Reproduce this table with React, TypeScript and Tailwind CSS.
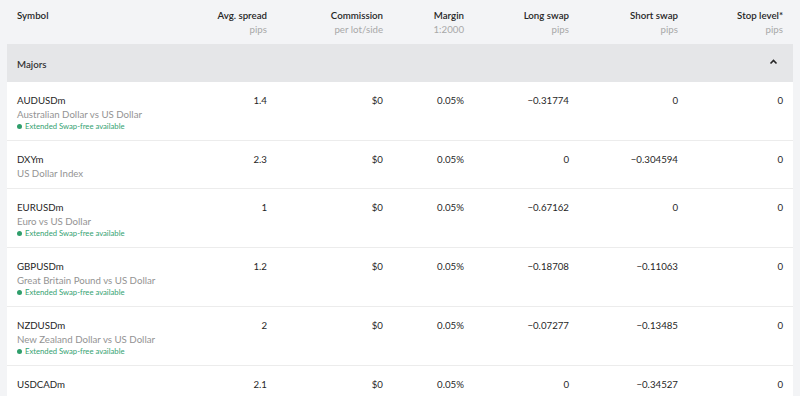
import React from "react";

type Row = {
  symbol: string;
  name: string;
  swapFree: boolean;
  spread: string;
  commission: string;
  margin: string;
  longSwap: string;
  shortSwap: string;
  stop: string;
};

const rows: Row[] = [
  { symbol: "AUDUSDm", name: "Australian Dollar vs US Dollar", swapFree: true, spread: "1.4", commission: "$0", margin: "0.05%", longSwap: "−0.31774", shortSwap: "0", stop: "0" },
  { symbol: "DXYm", name: "US Dollar Index", swapFree: false, spread: "2.3", commission: "$0", margin: "0.05%", longSwap: "0", shortSwap: "−0.304594", stop: "0" },
  { symbol: "EURUSDm", name: "Euro vs US Dollar", swapFree: true, spread: "1", commission: "$0", margin: "0.05%", longSwap: "−0.67162", shortSwap: "0", stop: "0" },
  { symbol: "GBPUSDm", name: "Great Britain Pound vs US Dollar", swapFree: true, spread: "1.2", commission: "$0", margin: "0.05%", longSwap: "−0.18708", shortSwap: "−0.11063", stop: "0" },
  { symbol: "NZDUSDm", name: "New Zealand Dollar vs US Dollar", swapFree: true, spread: "2", commission: "$0", margin: "0.05%", longSwap: "−0.07277", shortSwap: "−0.13485", stop: "0" },
  { symbol: "USDCADm", name: "", swapFree: false, spread: "2.1", commission: "$0", margin: "0.05%", longSwap: "0", shortSwap: "−0.34527", stop: "0" },
];

const headers = [
  { title: "Avg. spread", sub: "pips" },
  { title: "Commission", sub: "per lot/side" },
  { title: "Margin", sub: "1:2000" },
  { title: "Long swap", sub: "pips" },
  { title: "Short swap", sub: "pips" },
  { title: "Stop level*", sub: "pips" },
];

const cols = "grid grid-cols-[150px_100px_116px_81px_105px_109px_105px]";

export default function App() {
  return (
    <div className="h-[396px] w-[800px] overflow-hidden bg-[#f3f4f6] px-[7px] font-['Lato',sans-serif] text-[9.7px] text-[#1f1f1f]">
      {/* header */}
      <div className={`${cols} px-[10px] pt-[8px] pb-[8px] leading-[14px]`}>
        <div className="font-semibold text-[#262626]">Symbol</div>
        {headers.map((h) => (
          <div key={h.title} className="text-right">
            <div className="font-semibold text-[#262626]">{h.title}</div>
            <div className="text-[#a8a8a8]">{h.sub}</div>
          </div>
        ))}
      </div>

      {/* group */}
      <div className="flex h-[38px] items-center justify-between bg-[#e5e6e8] pt-[3px] px-[10px]">
        <span className="font-semibold text-[#333333]">Majors</span>
        <svg width="9" height="6" viewBox="0 0 9 6" className="mr-[5px] mb-[5px]">
          <polyline points="1.5,4.5 4.5,1.5 7.5,4.5" fill="none" stroke="#262626" strokeWidth="1.6" />
        </svg>
      </div>

      {/* rows */}
      <div className="bg-white">
        {rows.map((r) => (
          <div key={r.symbol} className={`${cols} border-b border-[#ececec] px-[10px] pt-[11px] pb-[7.5px] leading-[14px]`}>
            <div className="whitespace-nowrap">
              <div>{r.symbol}</div>
              {r.name && <div className="text-[#939393]">{r.name}</div>}
              {r.swapFree && (
                <div className="flex h-[11.5px] items-center gap-[3px] text-[7.7px] leading-[11.5px] text-[#34a272]">
                  <span className="h-[5px] w-[5px] rounded-full bg-[#2f9e6b]" />
                  Extended Swap-free available
                </div>
              )}
            </div>
            <div className="text-right">{r.spread}</div>
            <div className="text-right">{r.commission}</div>
            <div className="text-right">{r.margin}</div>
            <div className="text-right">{r.longSwap}</div>
            <div className="text-right">{r.shortSwap}</div>
            <div className="text-right">{r.stop}</div>
          </div>
        ))}
      </div>
    </div>
  );
}
